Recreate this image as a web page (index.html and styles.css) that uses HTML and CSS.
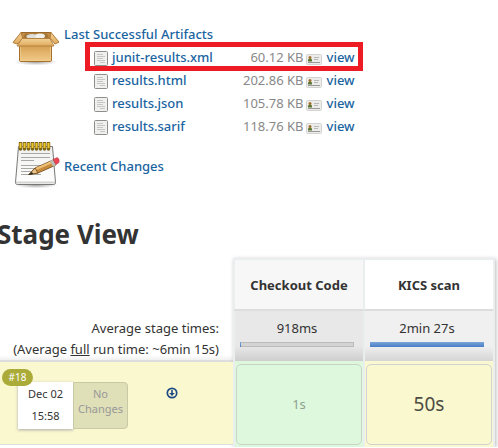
FILE: index.html
```html
<!DOCTYPE html>
<html lang="en">
<head>
<meta charset="utf-8">
<title>Stage View</title>
<link rel="stylesheet" href="styles.css">
</head>
<body>
<svg class="defs" aria-hidden="true">
  <defs>
    <linearGradient id="tan" x1="0" y1="0" x2="0" y2="1"><stop offset="0" stop-color="#cf9646"/><stop offset=".5" stop-color="#e2b36a"/><stop offset="1" stop-color="#f0cb8a"/></linearGradient>
    <linearGradient id="flap" x1="0" y1="0" x2="0" y2="1"><stop offset="0" stop-color="#f3d296"/><stop offset="1" stop-color="#dfab5e"/></linearGradient>
    <linearGradient id="paper" x1="0" y1="0" x2="0" y2="1"><stop offset="0" stop-color="#f0f0ee"/><stop offset="1" stop-color="#fff"/></linearGradient>
    <radialGradient id="shade"><stop offset="0" stop-color="#777" stop-opacity=".7"/><stop offset="1" stop-color="#999" stop-opacity="0"/></radialGradient>
    <symbol id="doc" viewBox="0 0 14 16">
      <rect x=".5" y=".5" width="13" height="14" rx="1" fill="#f0f0ef" stroke="#8d8f8b"/>
      <path d="M3 3.500h6M3 5.500h8M3 7.500h6M3 9.500h8M6 11.500h5" stroke="#c6c7c4"/>
    </symbol>
    <symbol id="card" viewBox="0 0 16 12">
      <rect x=".5" y="1.500" width="15" height="10" rx="1" fill="#ececea" stroke="#d3d3d0"/>
      <circle cx="4" cy="4.500" r="1.500" fill="#a5702f"/>
      <path d="M2 8.500V6.500l2-1 2 1v2z" fill="#5d7733"/>
      <path d="M8 4.500h5M8 6.500h4" stroke="#b8b8b6"/>
      <path d="M2 9.500h12" stroke="#999"/>
    </symbol>
  </defs>
</svg>
<main>
  <section class="entry">
    <svg class="big-icon" viewBox="0 0 48 48" aria-hidden="true">
      <ellipse cx="24" cy="39" rx="22" ry="3.500" fill="url(#shade)"/>
      <path d="M7.500 20h32v17q0 1.500-1.500 1.500H9q-1.500 0-1.500-1.500z" fill="url(#tan)" stroke="#a8702b"/>
      <path d="M8.500 24v13.500h30V24" fill="none" stroke="#f0cf92" stroke-opacity=".7"/>
      <path d="M9 9.500h30l-1 7H10z" fill="#c08c48" stroke="#9a6929"/>
      <path d="M13 10.500h22l2 5H11z" fill="#a37637"/>
      <ellipse cx="20" cy="13.500" rx="5.500" ry="2.500" fill="#dededb"/>
      <ellipse cx="28" cy="13" rx="5" ry="2.500" fill="#f0f0ed"/>
      <path d="M9 9.500L1 19.500l4 1.500 6-5zM39 9.500l8 9.500-4 2-5-6z" fill="url(#flap)" stroke="#b27a34"/>
      <path d="M10 15.500h28l4 7.500H5z" fill="url(#flap)" stroke="#b88340"/>
    </svg>
    <div class="artifacts">
      <a class="title" href="#artifacts">Last Successful Artifacts</a>
      <table class="files">
        <tr class="marked"><td><svg class="doc"><use href="#doc"/></svg><a href="#xml">junit-results.xml</a></td><td class="size">60.12 KB</td><td><svg class="card"><use href="#card"/></svg><a href="#view1">view</a></td></tr>
        <tr><td><svg class="doc"><use href="#doc"/></svg><a href="#html">results.html</a></td><td class="size">202.86 KB</td><td><svg class="card"><use href="#card"/></svg><a href="#view2">view</a></td></tr>
        <tr><td><svg class="doc"><use href="#doc"/></svg><a href="#json">results.json</a></td><td class="size">105.78 KB</td><td><svg class="card"><use href="#card"/></svg><a href="#view3">view</a></td></tr>
        <tr><td><svg class="doc"><use href="#doc"/></svg><a href="#sarif">results.sarif</a></td><td class="size">118.76 KB</td><td><svg class="card"><use href="#card"/></svg><a href="#view4">view</a></td></tr>
      </table>
    </div>
  </section>
  <section class="entry changes">
    <svg class="big-icon" viewBox="0 0 48 48" aria-hidden="true">
      <ellipse cx="24" cy="43" rx="22" ry="3.500" fill="url(#shade)"/>
      <path d="M6.500 4.500h34l3 36q0 2-2 2H5.500q-2 0-2-2z" fill="url(#paper)" stroke="#777975"/>
      <path d="M4 40.500h39" stroke="#d3d4d1" stroke-width="2"/>
      <path d="M9 11.500h29M9 15.500h29M9 18.500h13M9 23.500h28M9 26.500h24M9 29.500h12M9 32.500h20" stroke="#a8a9a6"/>
      <path d="M8.500 1v6M12.500 1v6M16.500 1v6M20.500 1v6M24.500 1v6M28.500 1v6M32.500 1v6M36.500 1v6" stroke="#7d6614" stroke-width="3.500" stroke-linecap="round"/>
      <path d="M8.500 1v5M12.500 1v5M16.500 1v5M20.500 1v5M24.500 1v5M28.500 1v5M32.500 1v5M36.500 1v5" stroke="#edc62c" stroke-width="2"/>
      <path d="M17 32.500l6-6.500 18-8 3 5-18 8z" fill="#c98b3c" stroke="#6b4210" stroke-width=".8"/>
      <path d="M24 27l17-7.500" stroke="#efc27a" stroke-width="2"/>
      <path d="M17 32.500l6-6.500 3 5z" fill="#e9c48c" stroke="#6b4210" stroke-width=".8"/>
      <path d="M16 33l4-3 1 2z" fill="#222"/>
      <path d="M38 19l3 5.500 3-1-3-6z" fill="#bcbcb8"/>
      <path d="M41 17.500l4-2q3 1 2 5l-3 2z" fill="#ee4455" stroke="#b9404e" stroke-width=".6"/>
    </svg>
    <a class="title" href="#changes">Recent Changes</a>
  </section>
  <h2>Stage View</h2>
  <div class="pipeline">
    <div class="runs">
      <div class="averages">Average stage times:<br>(Average <u>full</u> run time: ~6min 15s)</div>
      <div class="run">
        <span class="badge">#18</span>
        <div class="stamp"><span>Dec 02</span><span>15:58</span></div>
        <div class="commits">No<br>Changes</div>
        <a class="download" href="#download" aria-label="Download artifacts"><svg viewBox="0 0 12 12"><circle cx="6" cy="6" r="4.700" fill="none" stroke="#204a87" stroke-width="1.700"/><path d="M5.200 3h1.600v3h2L6 9 3.200 6h2z" fill="#204a87"/></svg></a>
      </div>
    </div>
    <table class="stages">
      <thead><tr><th>Checkout Code</th><th>KICS scan</th></tr></thead>
      <tbody>
        <tr class="times"><td>918ms<div class="bar"><div class="fill" style="width:1%"></div></div></td><td>2min 27s<div class="bar"><div class="fill" style="width:100%"></div></div></td></tr>
        <tr class="results"><td class="green"><div class="cell">1s</div></td><td class="yellow"><div class="cell long">50s</div></td></tr>
      </tbody>
    </table>
  </div>
</main>
</body>
</html>
```
FILE: styles.css
```css
* { box-sizing: border-box; }
body {
  margin: 0;
  background: #fff;
  color: #333;
  font: 13px/23px "Noto Sans", "Open Sans", sans-serif;
  overflow: hidden;
}
.defs { position: absolute; width: 0; height: 0; }
a { color: #1a649f; font-weight: 500; text-decoration: none; }
.entry { display: flex; align-items: flex-start; padding: 23px 0 0 12px; }
.big-icon { width: 48px; height: 48px; flex: none; margin-right: 4px; }
.title { display: block; line-height: 23px; }
.files { border-collapse: collapse; margin-left: 21px; }
.files td { height: 23px; padding: 0 4px 0 9px; white-space: nowrap; }
.files td:last-child { padding: 0 8px 0 0; }
.files td:first-child { width: 158px; }
.files .size { color: #888; padding: 0 2px 0 0; text-align: right; }
.marked { position: relative; }
.marked::after {
  content: "";
  position: absolute;
  inset: -4px 0 -2px;
  border: 5px solid #ed1c24;
  pointer-events: none;
}
.doc { width: 14px; height: 16px; margin-right: 4px; vertical-align: middle; }
.card { width: 16px; height: 12px; margin-right: 5px; vertical-align: middle; }
.changes { align-items: center; padding: 4px 0 0 12px; }
h2 { margin: 25px 0 0 -3px; font-size: 26px; line-height: 38px; font-weight: 700; }
.pipeline { display: flex; margin: 5px 3px 0 0; }
.runs { flex: 1; padding-top: 2px; }
.averages {
  height: 102px;
  padding: 58px 14px 0 0;
  border-bottom: 2px solid #ddd;
  background: linear-gradient(#fff 95%, #f0f0f0);
  text-align: right;
  line-height: 21px;
}
.run {
  position: relative;
  display: flex;
  height: 83px;
  padding: 20px 0 0 18px;
  background: #faf8cf;
  border-bottom: 1px solid #ddd;
  font-size: 11px;
}
.badge {
  position: absolute;
  left: 2px;
  top: 7px;
  width: 31px;
  border-radius: 9px;
  background: #abab3a;
  color: #fff;
  font-size: 10px;
  line-height: 17px;
  text-align: center;
}
.stamp {
  display: flex;
  flex-direction: column;
  width: 55px;
  height: 47px;
  padding-top: 1px;
  background: #fff;
  box-shadow: 0 1px 3px #aaa;
  line-height: 22px;
  text-align: center;
}
.commits {
  width: 55px;
  height: 47px;
  padding-top: 3px;
  border: 1px solid #c9c9a5;
  border-radius: 0 4px 4px 0;
  background: #dfdfb8;
  color: #999;
  line-height: 15px;
  text-align: center;
}
.download { margin: 5px 0 0 38px; line-height: 12px; }
.download svg { display: block; width: 12px; height: 12px; }
.stages {
  width: 262px;
  border-collapse: separate;
  border-spacing: 0;
  border: solid #ebeeef;
  border-width: 2px 2px 0 0;
  box-shadow: 1px 1px 4px #bbb;
  table-layout: fixed;
}
.stages th, .stages td { padding: 0; border-left: 2px solid #ebeeef; text-align: center; }
.stages th { height: 51px; padding-top: 2px; border-bottom: 2px solid #ddd; background: #f7f7f7; }
.stages th:last-child { background: #fff; }
.times td {
  height: 50px;
  padding: 6px 9px 0 5px;
  background: linear-gradient(#e8e8e8 70%, #cecece);
  vertical-align: top;
}
.times td:last-child { background: linear-gradient(#f0f0f0 70%, #d5d5d5); }
.bar { height: 5px; margin-top: 2px; background: #d4d4d4; box-shadow: inset 0 0 0 1px #bbb; }
.fill { height: 5px; background: linear-gradient(#7ba6d8, #4a7cc7); }
.results td { padding: 3px 1px 2px; }
.green { background: #ddf8dc; }
.yellow { background: #faf8cf; }
.cell { height: 81px; border: 1px solid #c9d4c9; border-radius: 5px; line-height: 79px; color: #8fa08f; }
.long { border-color: #d1d1d1; color: #4d4d44; font-size: 19px; }
```
